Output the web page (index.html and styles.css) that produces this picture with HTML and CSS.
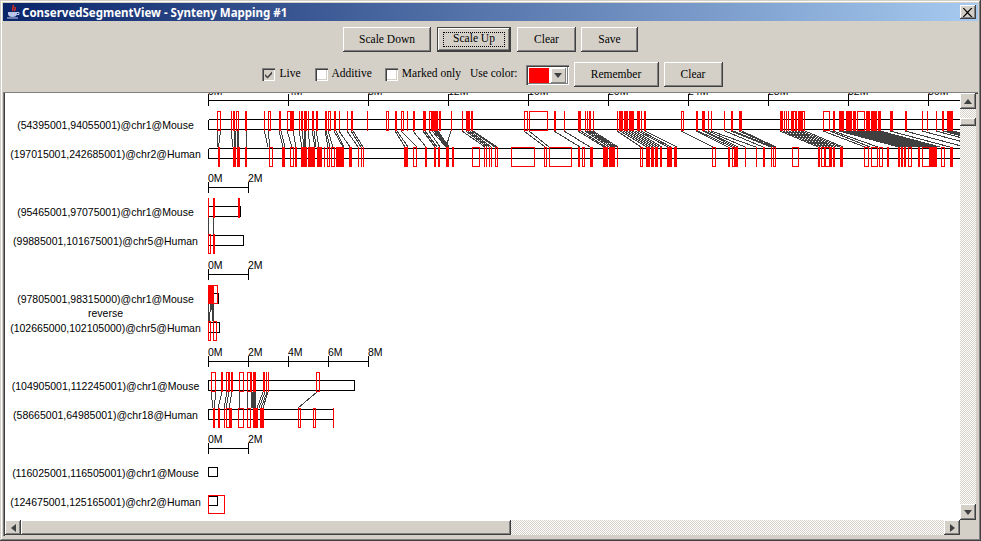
FILE: index.html
```html
<!DOCTYPE html>
<html lang="en">
<head>
<meta charset="utf-8">
<title>ConservedSegmentView - Synteny Mapping #1</title>
<link rel="stylesheet" href="styles.css">
</head>
<body>
<div class="window">
  <div class="titlebar">
    <svg class="java" width="16" height="16" viewBox="0 0 16 16">
      <path d="M8 1c2 2-2 3 0 6M10 3c1 2-1 3 0 4" fill="none" stroke="#e03020" stroke-width="1.5"/>
      <path d="M3 8h9v2c0 2-2 3-4.500 3S3 12 3 10z" fill="#b8c4e8"/>
      <path d="M12 8.500h2v2h-2M2 14h11" fill="none" stroke="#c8d0f0"/>
    </svg>
    <span class="title">ConservedSegmentView - Synteny Mapping #1</span>
    <button class="close" type="button" aria-label="Close">
      <svg width="10" height="9" viewBox="0 0 10 9"><path d="M1 0l3.500 3.500L8 0h1.500L5.300 4.500 9.500 9H8L4.500 5.500 1 9H-.5l4.200-4.500L-.5 0z" fill="#000"/></svg>
    </button>
  </div>

  <div class="row row-one">
    <button class="btn w-88" type="button">Scale Down</button>
    <button class="btn btn-default w-74" type="button"><span class="focus">Scale Up</span></button>
    <button class="btn w-59" type="button">Clear</button>
    <button class="btn w-57" type="button">Save</button>
  </div>

  <div class="row row-two">
    <label class="check"><span class="box box-on"><svg width="9" height="9" viewBox="0 0 9 9"><path d="M1 4l2.500 2.500L8 1.500v2.500L3.500 8.500 1 6z" fill="#404040"/></svg></span>Live</label>
    <label class="check gap-a"><span class="box"></span>Additive</label>
    <label class="check gap-b"><span class="box"></span>Marked only</label>
    <span class="use">Use color:</span>
    <span class="combo"><span class="swatch"></span><span class="drop"><span class="tri"></span></span></span>
    <button class="btn w-85 gap-c" type="button">Remember</button>
    <button class="btn w-59 gap-d" type="button">Clear</button>
  </div>

  <div class="pane">
    <div class="view">
      <svg class="chart" width="955" height="427" viewBox="5 93 955 427">
        <!-- rulers -->
        <path class="ink" d="M208 100.500H960M208.500 94v12M288.500 94v12M368.500 94v12M448.500 94v12M528.500 94v12M608.500 94v12M688.500 94v12M768.500 94v12M848.500 94v12M928.500 94v12
          M208 187.500h41M208.500 182v11M248.500 182v11
          M208 274.500h41M208.500 269v11M248.500 269v11
          M208 361.500h161M208.500 356v11M248.500 356v11M288.500 356v11M328.500 356v11M368.500 356v11
          M208 448.500h41M208.500 443v11M248.500 443v11"/>
        <g class="tick">
          <text x="208" y="95">0M</text><text x="288" y="95">4M</text><text x="368" y="95">8M</text><text x="448" y="95">12M</text><text x="528" y="95">16M</text><text x="608" y="95">20M</text><text x="688" y="95">24M</text><text x="768" y="95">28M</text><text x="848" y="95">32M</text><text x="928" y="95">36M</text>
          <text x="208" y="182">0M</text><text x="248" y="182">2M</text>
          <text x="208" y="269">0M</text><text x="248" y="269">2M</text>
          <text x="208" y="356">0M</text><text x="248" y="356">2M</text><text x="288" y="356">4M</text><text x="328" y="356">6M</text><text x="368" y="356">8M</text>
          <text x="208" y="443">0M</text><text x="248" y="443">2M</text>
        </g>

        <!-- chromosome bars -->
        <path class="ink" d="M208.500 119.500H960M208.500 129.500H960M208.500 119.500v10M208.500 148.500H960M208.500 158.500H960M208.500 148.500v10
          M208.500 206.500h32v10h-32z
          M208.500 235.500h35v10h-35z
          M208.500 293.500h10v10h-10z
          M208.500 322.500h11v10h-11z
          M208.500 380.500h146v10h-146z
          M208.500 409.500h125v10h-125z
          M208.500 467.500h9v9h-9z
          M208.500 496.500h9v9h-9z"/>

        <!-- connectors -->
        <path class="link" d="M217.500 131V147M220.500 131L218.500 147M231 131L233 147M234 131L235 147M235 131L236 147M237 131L238 147M238 131L239 147M246 131V147M264 131L265 134L268 147M268 131L270 147M279 131L283 147M281 131L285 147M287 131L292 147M293 131L296 147M299 131L302 147M302 131L304 147M304 131L305 147M305 131L306 147M308 131L310 147M312 131L315 147M314 131L316 147M316 131L319 147M325 131L328 147M326 131L330 147M328 131L333 147M334 131L343 147M336 131L344 147M339 131L350 147M347 131L358 147M351 131L361 147M353 131L363 147
          M395 131L405 147M397 131L408 147M401 131L417 147M413 131L426 147M423 131L435 147M425 131L437 147M429 131L440 147M432 131L446 147M434 131L447 147M435 131L448 147M436 131L449 147M437 131L449 147M438 131L449 147M451 131L446 147
          M462 131L485 147M466 131L487 147M468 131L489 147M470 131L491 147M472 131L495 147M473 131L497 147M524 131L545 147M529 131L549 147
          M554 131L580 147M564 131L590 147M578 131L604 147M581 131L606 147M585 131L609 147M587 131L612 147M589 131L614 147M591 131L616 147M593 131L618 147
          M617 131L641 147M620 131L647 147M623 131L650 147M626 131L653 147M629 131L656 147M632 131L659 147M635 131L662 147M638 131L668 147M641 131L671 147M645 131L677 147
          M681 131L713 147M696 131L728 147M698 131L732 147M703 131L735 147M705 131L738 147M708 131L745 147M711 131L756 147M725 131L763 147M731 131L771 147M733 131L773 147M739 131L775 147M742 131L776 147
          M780 131L818 147M783 131L821 147M786 131L824 147M789 131L827 147M792 131L830 147M795 131L833 147M798 131L836 147M801 131L840 147M805 131L843 147
          M823 131L865 147M830 131L870 147M833 131L878 147
          M839 131L899 147M841 131L901 147M843 131L903 147M845 131L905 147M847 131L907 147M849 131L909 147M851 131L911 147M853 131L913 147M855 131L915 147M857 131L917 147M859 131L919 147M861 131L921 147M863 131L923 147M865 131L925 147M867 131L927 147M869 131L929 147M871 131L931 147M873 131L933 147M875 131L935 147M877 131L937 147M880 131L940 147M890 131L950 147M905 131L965 147M922 131L982 147M936 131L996 147M943 131L1003 147M945 131L1005 147M947 131L1007 147M949 131L1009 147M951 131L1011 147M953 131L1013 147
          M208.500 218V234M213.500 218V234
          M208.500 304V321M210.500 304L209.500 321M212.500 304V321M213.500 304V321M211 304L214 321
          M211 392L213 408M216 392L214 408M222 392L218 408M227 392L224 408M229 392L226 408M232 392L229 408M240 392L239 408M247.500 392V408M263 392L257 408M265 392L259 408M267 392L261 408M268 392L263 408M317 392L298 408"/>
        <path class="block-link" d="M251 392h5v16h-5z"/>

        <!-- marked segments: solid -->
        <path class="solid" d="
          M231 111h1v20h-1zM245 111h2v20h-2zM264 111h1v20h-1zM279 111h2v20h-2zM291 111h3v20h-3zM299 111h1v20h-1zM301 111h2v20h-2zM304 111h3v20h-3zM308 111h1v20h-1zM312 111h2v20h-2zM325 111h2v20h-2zM334 111h2v20h-2zM339 111h1v20h-1zM347 111h1v20h-1zM351 111h2v20h-2zM367 111h1v20h-1zM395 111h2v20h-2zM407 111h1v20h-1zM413 111h2v20h-2zM423 111h3v20h-3zM432 111h6v20h-6zM451 111h1v20h-1zM462 111h1v20h-1zM466 111h4v20h-4zM471 111h2v20h-2zM554 111h2v20h-2zM564 111h1v20h-1zM578 111h3v20h-3zM585 111h1v20h-1zM587 111h1v20h-1zM589 111h2v20h-2zM593 111h1v20h-1zM617 111h1v20h-1zM619 111h4v20h-4zM624 111h4v20h-4zM629 111h5v20h-5zM637 111h3v20h-3zM641 111h1v20h-1zM644 111h2v20h-2zM696 111h2v20h-2zM702 111h3v20h-3zM708 111h1v20h-1zM711 111h1v20h-1zM724 111h1v20h-1zM731 111h2v20h-2zM739 111h3v20h-3z
          M780 111h3v20h-3zM784 111h1v20h-1zM786 111h1v20h-1zM788 111h1v20h-1zM791 111h3v20h-3zM796 111h1v20h-1zM798 111h4v20h-4zM833 111h2v20h-2zM839 111h5v20h-5zM846 111h2v20h-2zM848 111h4v20h-4zM853 111h3v20h-3zM866 111h4v20h-4zM871 111h2v20h-2zM873 111h4v20h-4zM878 111h3v20h-3zM890 111h3v20h-3zM905 111h2v20h-2zM922 111h1v20h-1zM927 111h1v20h-1zM936 111h1v20h-1zM942 111h2v20h-2zM947 111h2v20h-2zM949 111h4v20h-4z
          M218 147h2v20h-2zM233 147h3v20h-3zM237 147h3v20h-3zM245 147h2v20h-2zM282 147h3v20h-3zM295 147h2v20h-2zM301 147h6v20h-6zM308 147h7v20h-7zM317 147h5v20h-5zM324 147h1v20h-1zM336 147h8v20h-8zM349 147h3v20h-3zM358 147h1v20h-1zM361 147h1v20h-1zM363 147h1v20h-1zM404 147h4v20h-4zM425 147h2v20h-2zM434 147h2v20h-2zM438 147h2v20h-2zM446 147h3v20h-3zM452 147h2v20h-2zM484 147h1v20h-1zM486 147h1v20h-1zM489 147h1v20h-1zM491 147h1v20h-1zM578 147h2v20h-2zM590 147h3v20h-3zM603 147h5v20h-5zM609 147h2v20h-2zM611 147h4v20h-4zM617 147h1v20h-1zM646 147h4v20h-4zM651 147h3v20h-3zM655 147h3v20h-3zM660 147h2v20h-2zM667 147h5v20h-5zM674 147h3v20h-3zM728 147h2v20h-2zM734 147h4v20h-4zM745 147h1v20h-1zM756 147h1v20h-1zM763 147h2v20h-2zM771 147h1v20h-1zM818 147h2v20h-2zM830 147h2v20h-2zM833 147h2v20h-2zM840 147h3v20h-3zM887 147h2v20h-2zM898 147h2v20h-2zM901 147h2v20h-2zM904 147h2v20h-2zM918 147h2v20h-2zM930 147h7v20h-7zM950 147h3v20h-3z
          M208 198h1v20h-1zM213 198h2v20h-2zM238 198h2v20h-2zM213 234h2v20h-2z
          M208 285h5v19h-5z
          M221 372h2v20h-2zM228 372h2v20h-2zM231 372h2v20h-2zM251 372h1v20h-1zM253 372h3v20h-3zM263 372h2v20h-2zM266 372h1v20h-1zM268 372h1v20h-1z
          M213 408h2v20h-2zM218 408h2v20h-2zM224 408h1v20h-1zM229 408h3v20h-3zM253 408h5v20h-5zM260 408h4v20h-4zM333 408h1v20h-1z"/>

        <!-- marked segments: outlined -->
        <path class="open" d="
          M217.500 111.500h3v19h-3zM233.500 111.500h1v19h-1zM236.500 111.500h2v19h-2zM268.500 111.500h2v19h-2zM287.500 111.500h3v19h-3zM316.500 111.500h1v19h-1zM328.500 111.500h2v19h-2zM386.500 111.500h2v19h-2zM401.500 111.500h2v19h-2zM429.500 111.500h2v19h-2zM439.500 111.500h1v19h-1zM524.500 111.500h3v19h-3zM529.500 111.500h18v19h-18zM681.500 111.500h2v19h-2zM792.500 111.500h3v19h-3zM802.500 111.500h2v19h-2zM823.500 111.500h6v19h-6zM857.500 111.500h7v19h-7z
          M269.500 147.500h3v19h-3zM290.500 147.500h3v19h-3zM327.500 147.500h2v19h-2zM331.500 147.500h3v19h-3zM413.500 147.500h3v19h-3zM472.500 147.500h7v19h-7zM495.500 147.500h2v19h-2zM511.500 147.500h23v19h-23zM544.500 147.500h2v19h-2zM549.500 147.500h22v19h-22zM582.500 147.500h2v19h-2zM640.500 147.500h2v19h-2zM712.500 147.500h3v19h-3zM732.500 147.500h2v19h-2zM773.500 147.500h2v19h-2zM792.500 147.500h6v19h-6zM821.500 147.500h3v19h-3zM825.500 147.500h4v19h-4zM864.500 147.500h4v19h-4zM871.500 147.500h6v19h-6zM879.500 147.500h3v19h-3zM908.500 147.500h3v19h-3zM922.500 147.500h7v19h-7zM941.500 147.500h3v19h-3z
          M208.500 234.500h2v19h-2z
          M213.500 285.500h4v18h-4z
          M208.500 321.500h2v19h-2zM213.500 321.500h3v19h-3z
          M211.500 372.500h4v19h-4zM226.500 372.500h3v19h-3zM239.500 372.500h4v19h-4zM247.500 372.500h3v19h-3zM316.500 372.500h3v19h-3z
          M226.500 408.500h3v19h-3zM238.500 408.500h5v19h-5zM247.500 408.500h3v19h-3zM298.500 408.500h2v19h-2zM313.500 408.500h2v19h-2z
          M208.500 495.500h16v18h-16z"/>

        <!-- row labels -->
        <g class="label">
          <text x="105.500" y="129">(54395001,94055001)@chr1@Mouse</text>
          <text x="105.500" y="158">(197015001,242685001)@chr2@Human</text>
          <text x="105.500" y="216">(95465001,97075001)@chr1@Mouse</text>
          <text x="105.500" y="245">(99885001,101675001)@chr5@Human</text>
          <text x="105.500" y="303">(97805001,98315000)@chr1@Mouse</text>
          <text x="105.500" y="317">reverse</text>
          <text x="105.500" y="332">(102665000,102105000)@chr5@Human</text>
          <text x="105.500" y="390">(104905001,112245001)@chr1@Mouse</text>
          <text x="105.500" y="419">(58665001,64985001)@chr18@Human</text>
          <text x="105.500" y="477">(116025001,116505001)@chr1@Mouse</text>
          <text x="105.500" y="506">(124675001,125165001)@chr2@Human</text>
        </g>
      </svg>
    </div>

    <div class="vbar">
      <span class="arrow"><span class="tri tri-up"></span></span>
      <span class="vspace"></span>
      <span class="vthumb"></span>
      <span class="track"></span>
      <span class="arrow"><span class="tri"></span></span>
    </div>

    <div class="hbar">
      <span class="arrow-h"><span class="tri tri-left"></span></span>
      <span class="hthumb"></span>
      <span class="track"></span>
      <span class="arrow-h"><span class="tri tri-right"></span></span>
    </div>
    <div class="corner"></div>
  </div>
</div>
</body>
</html>
```

FILE: styles.css
```css
* { box-sizing: border-box; }
html, body { margin: 0; padding: 0; }
body { width: 981px; height: 541px; overflow: hidden; background: #d4d0c8; }

.window {
  width: 981px; height: 541px; padding: 3px 3px 5px;
  display: flex; flex-direction: column;
  background: #d4d0c8;
  box-shadow: inset -1px -1px #404040, inset 1px 1px #d4d0c8, inset -2px -2px #808080, inset 2px 2px #fff;
  font-family: "Liberation Serif", serif; font-size: 11.5px; color: #000;
}

.titlebar {
  flex: 0 0 18px; display: flex; align-items: center; padding: 0 2px 0 2px;
  background: linear-gradient(90deg, #0a246a, #a6caf0);
}
.java { flex: none; }
.title { margin-left: 1px; flex: 1; color: #fff; font: bold 11.5px "Noto Sans", sans-serif; white-space: nowrap; }
.close {
  width: 16px; height: 14px; padding: 0; border: 0; display: flex; align-items: center; justify-content: center;
  background: #d4d0c8;
  box-shadow: inset -1px -1px #404040, inset 1px 1px #fff, inset -2px -2px #808080;
}

.row { flex: none; display: flex; height: 25px; }
.row-one { margin-top: 6px; justify-content: center; gap: 6px; }
.row-two { margin-top: 10px; padding-left: 4px; justify-content: center; align-items: center; }

.btn {
  height: 25px; padding: 0 0 2px; border: 0; background: #d4d0c8; color: #000;
  font: 11.5px "Liberation Serif", serif;
  box-shadow: inset -1px -1px #404040, inset 1px 1px #fff, inset -2px -2px #808080;
}
.btn-default {
  padding: 0;
  display: flex; align-items: center; justify-content: center;
  box-shadow: inset 0 0 0 1px #404040, inset -2px -2px #404040, inset 2px 2px #fff, inset -3px -3px #808080;
}
.focus { width: 62px; height: 15px; line-height: 11px; border: 1px dotted #000; text-align: center; }
.w-88 { width: 88px; } .w-74 { width: 74px; } .w-59 { width: 59px; } .w-57 { width: 57px; } .w-85 { width: 85px; }
.row-one .w-57 { margin-left: -1px; }

.check { display: flex; align-items: center; gap: 4px; padding-bottom: 4px; white-space: nowrap; }
.box {
  width: 13px; height: 13px; margin-top: 4px; display: flex; align-items: center; justify-content: center; background: #fff;
  box-shadow: inset 1px 1px #808080, inset 2px 2px #404040, inset -1px -1px #fff, inset -2px -2px #d4d0c8;
}
.box-on { background: #d4d0c8; }
.gap-a { margin-left: 14px; }
.gap-b { margin-left: 13px; }
.use { margin-left: 9px; padding-bottom: 4px; white-space: nowrap; }
.combo {
  margin-left: 8px; width: 43px; height: 20px; padding: 3px 3px 2px; display: flex; gap: 2px; background: #fff;
  box-shadow: inset 1px 1px #808080, inset 2px 2px #404040, inset -1px -1px #fff, inset -2px -2px #808080;
}
.swatch { width: 20px; background: #f00; }
.drop {
  width: 15px; display: flex; align-items: center; justify-content: center; background: #d4d0c8;
  box-shadow: inset -1px -1px #808080, inset 1px 1px #fff;
}
.tri { width: 0; height: 0; border: 4px solid transparent; border-top: 5px solid #404040; border-bottom: 0; }
.tri-up { border-top: 0; border-bottom: 5px solid #404040; }
.tri-left { border: 4px solid transparent; border-right: 5px solid #404040; border-left: 0; }
.tri-right { border: 4px solid transparent; border-left: 5px solid #404040; border-right: 0; }
.gap-c { margin-left: 5px; }
.gap-d { margin-left: 5px; }

.pane {
  flex: 1; margin-top: 5px; padding: 1px 2px 0 2px;
  display: grid; grid-template-columns: 955px 16px; grid-template-rows: 427px 15px;
  box-shadow: inset 1px 1px #808080, inset 2px 2px #404040;
}
.view { background: #fff; overflow: hidden; }
.chart { display: block; shape-rendering: crispEdges; }
.ink { fill: none; stroke: #000; stroke-width: 1; }
.link { fill: none; stroke: #404040; stroke-width: 1; }
.block-link { fill: #404040; }
.solid { fill: #f00; }
.open { fill: none; stroke: #f00; stroke-width: 1; }
.tick text, .label text { font-family: "Liberation Sans", sans-serif; font-size: 10.5px; fill: #000; }
.label text { text-anchor: middle; }

.track, .vspace {
  flex: 1;
  background-color: #fff;
  background-image: conic-gradient(#d4d0c8 25%, #fff 0 50%, #d4d0c8 0 75%, #fff 0);
  background-size: 2px 2px;
}
.vspace { flex: 0 0 9px; }
.vbar { display: flex; flex-direction: column; }
.hbar { display: flex; }
.arrow, .arrow-h {
  flex: none; display: flex; align-items: center; justify-content: center; background: #d4d0c8;
  box-shadow: inset -1px -1px #404040, inset 1px 1px #fff, inset -2px -2px #808080;
}
.arrow { height: 16px; }
.arrow-h { width: 16px; }
.vthumb {
  flex: 0 0 8px; background: #d4d0c8;
  box-shadow: inset -1px -1px #404040, inset 1px 1px #fff, inset -2px -2px #808080;
}
.hthumb {
  flex: 0 0 490px; background: #d4d0c8;
  box-shadow: inset -1px -1px #404040, inset 1px 1px #fff, inset -2px -2px #808080;
}
.corner { background: #d4d0c8; }
```
